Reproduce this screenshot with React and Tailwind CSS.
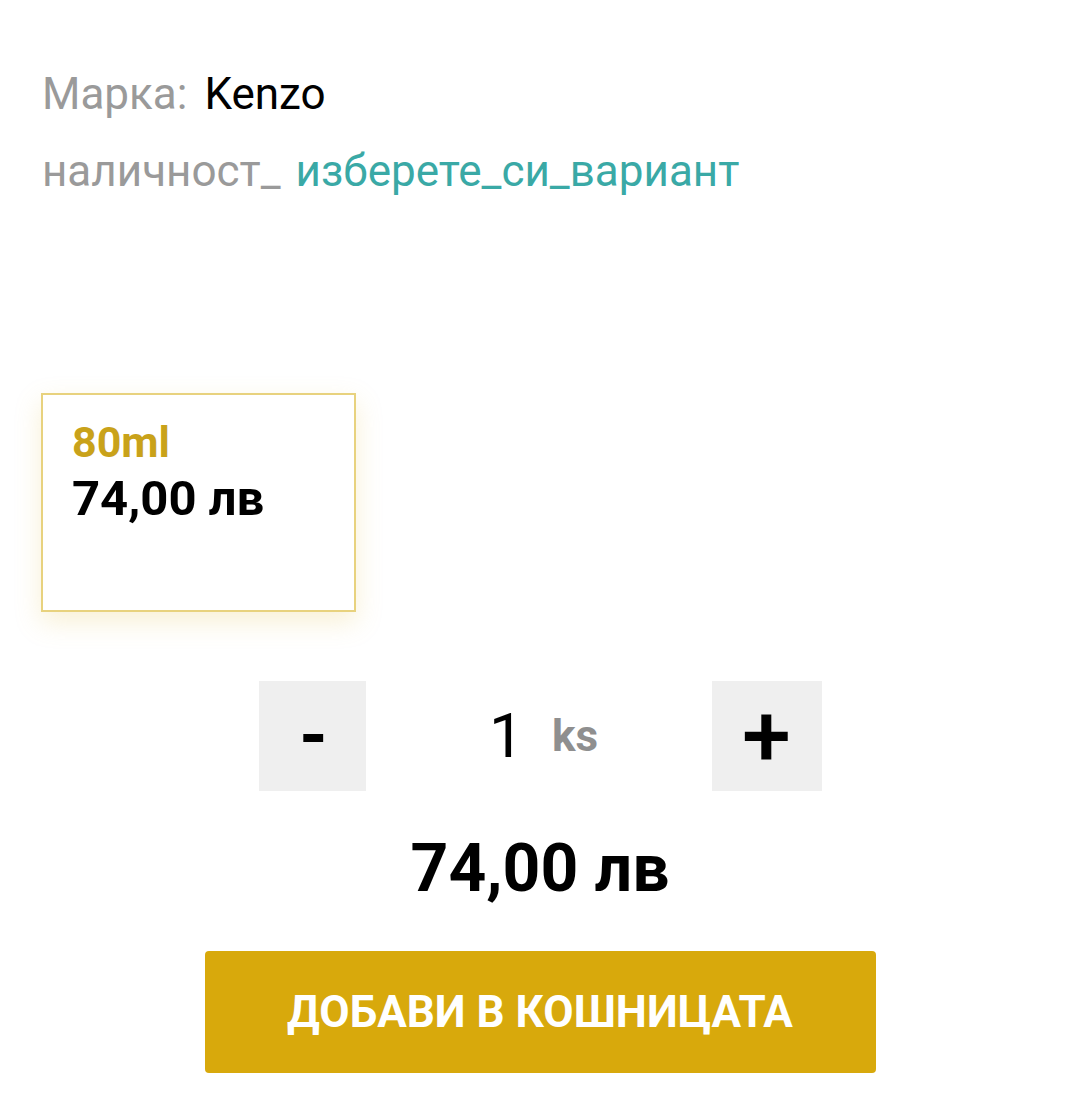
export default function App() {
  return (
    <div className="min-h-[1105px] w-[1080px] bg-white font-['Roboto',sans-serif]">
      {/* INFO */}
      <div className="px-[42px] pt-[66px]">
        <div className="flex items-baseline gap-[17px] text-[44px] leading-[56px]">
          <span className="text-[#9a9a9a]">Марка:</span>
          <span className="text-black">Kenzo</span>
        </div>
        <div className="mt-[21px] flex items-baseline gap-[15px] text-[44px] leading-[56px]">
          <span className="text-[#9a9a9a]">наличност_</span>
          <span className="text-[#3aa9a6]">изберете_си_вариант</span>
        </div>
      </div>

      {/* VARIANTS */}
      <div className="px-[41px] pt-[194px]">
        <div className="h-[219px] w-[315px] border-2 border-[#e8d27e] bg-white px-[29px] pt-[21px] shadow-[0_10px_24px_rgba(230,200,90,0.25)]">
          <div className="text-[43px] font-bold leading-[52px] text-[#c9a21a]">80ml</div>
          <div className="mt-[2px] text-[49px] font-bold leading-[58px] text-black">74,00 лв</div>
        </div>
      </div>

      {/* QUANTITY */}
      <div className="mt-[69px] flex justify-center">
        <div className="flex items-center">
          <button className="flex h-[110px] w-[107px] items-center justify-center bg-[#efefef] pl-[3px] text-[72px] font-bold leading-none text-black">
            -
          </button>
          <div className="flex w-[346px] items-center justify-center gap-[28px] pl-[10px]">
            <span className="text-[62px] leading-none text-black">1</span>
            <span className="text-[44px] font-bold leading-none text-[#8f8f8f]">ks</span>
          </div>
          <button className="flex h-[110px] w-[110px] items-center justify-center bg-[#efefef] text-[88px] font-medium leading-none text-black">
            +
          </button>
        </div>
      </div>

      {/* TOTAL */}
      <div className="mt-[38px] text-center text-[66px] font-bold leading-[80px] text-black">
        74,00 лв
      </div>

      {/* BUTTON */}
      <div className="mt-[42px] flex justify-center">
        <button className="h-[122px] w-[671px] rounded-[4px] bg-[#d8a90c] text-[44px] font-bold uppercase text-white">
          Добави в кошницата
        </button>
      </div>
    </div>
  );
}
